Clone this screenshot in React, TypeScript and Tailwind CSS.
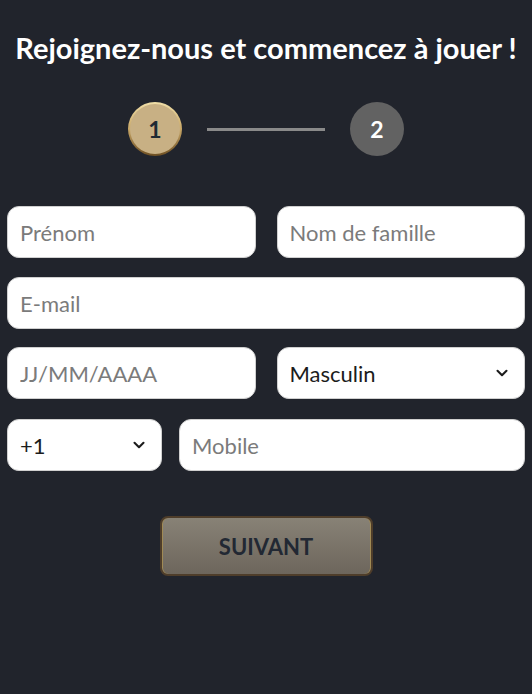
import { ChevronDown } from "lucide-react";

const inputCls =
  "h-[52px] w-full min-w-0 rounded-xl border border-[#d0d0d0] bg-white px-3 text-[22px] text-[#1c1c1c] placeholder:text-[#7b7b7b] outline-none";

function SelectBox({ value }: { value: string }) {
  return (
    <div className="relative min-w-0">
      <select defaultValue={value} className={`${inputCls} appearance-none`}>
        <option>{value}</option>
      </select>
      <ChevronDown
        className="pointer-events-none absolute right-[14px] top-1/2 h-[18px] w-[18px] -translate-y-1/2 text-[#1c1c1c]"
        strokeWidth={2.8}
      />
    </div>
  );
}

export default function App() {
  return (
    <div
      className="min-h-[694px] w-full bg-[#21242c] px-[7px]"
      style={{ fontFamily: "Lato, 'Open Sans', sans-serif" }}
    >
      <h1 className="pt-[30px] text-center text-[29px] font-bold leading-9 text-white">
        Rejoignez-nous et commencez à jouer !
      </h1>

      {/* steps */}
      <div className="mt-[36px] flex items-center justify-center">
        <div className="rounded-full bg-gradient-to-b from-[#f0dfa8] via-[#c9a868] to-[#6e4f22] p-[2px]">
          <div className="flex h-[50px] w-[50px] items-center justify-center rounded-full bg-[#c8b084] text-[23px] font-bold text-[#1f2a33]">
            1
          </div>
        </div>
        <div className="mx-[25px] h-[3px] w-[118px] bg-[#8a8a8a]" />
        <div className="flex h-[54px] w-[54px] items-center justify-center rounded-full bg-[#626262] text-[23px] font-bold text-white">
          2
        </div>
      </div>

      {/* form */}
      <div className="mt-[50px] flex flex-col">
        <div className="grid grid-cols-2 gap-[21px]">
          <input className={inputCls} placeholder="Prénom" />
          <input className={inputCls} placeholder="Nom de famille" />
        </div>
        <div className="mt-[19px]">
          <input className={inputCls} placeholder="E-mail" />
        </div>
        <div className="mt-[18px] grid grid-cols-2 gap-[21px]">
          <input className={inputCls} placeholder="JJ/MM/AAAA" />
          <SelectBox value="Masculin" />
        </div>
        <div className="mt-[20px] grid grid-cols-[155px_1fr] gap-[17px]">
          <SelectBox value="+1" />
          <input className={inputCls} placeholder="Mobile" />
        </div>
      </div>

      <div className="mt-[45px] flex justify-center">
        <button className="h-[60px] w-[213px] rounded-lg border-2 border-[#4e3d2a] bg-gradient-to-b from-[#888276] to-[#6d665c] text-[22px] font-bold text-[#222833] shadow-[inset_1px_0_0_#a08a55,inset_-1px_0_0_#a08a55]">
          SUIVANT
        </button>
      </div>
    </div>
  );
}
